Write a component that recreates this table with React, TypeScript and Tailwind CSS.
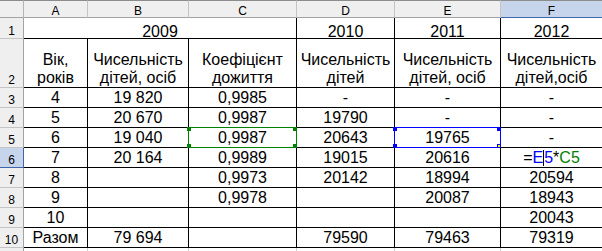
import React from 'react';

const FONT = "font-['Liberation_Sans',Arial,sans-serif]";

const COLS = ['A', 'B', 'C', 'D', 'E', 'F'];

const HEAD_LINES: string[][] = [
  ['Вік,', 'років'],
  ['Чисельність', 'дітей, осіб'],
  ['Коефіцієнт', 'дожиття'],
  ['Чисельність', 'дітей'],
  ['Чисельність', 'дітей, осіб'],
  ['Чисельність', 'дітей,осіб'],
];

const FORMULA = '__formula__';

const ROWS: string[][] = [
  ['4', '19 820', '0,9985', '-', '-', '-'],
  ['5', '20 670', '0,9987', '19790', '-', '-'],
  ['6', '19 040', '0,9987', '20643', '19765', '-'],
  ['7', '20 164', '0,9989', '19015', '20616', FORMULA],
  ['8', '', '0,9973', '20142', '18994', '20594'],
  ['9', '', '0,9978', '', '20087', '18943'],
  ['10', '', '', '', '', '20043'],
  ['Разом', '79 694', '', '79590', '79463', '79319'],
];

// edges of C5 (green) and E5 (blue) take the reference colours
const RIGHT_EDGE: Record<string, string> = {
  '5-1': 'border-r-[#008000]',
  '5-2': 'border-r-[#008000]',
  '5-3': 'border-r-[#0000ff]',
  '5-4': 'border-r-[#0000ff]',
};
const BOTTOM_EDGE: Record<string, string> = {
  '4-2': 'border-b-[#008000]',
  '5-2': 'border-b-[#008000]',
  '4-4': 'border-b-[#0000ff]',
  '5-4': 'border-b-[#0000ff]',
};

function RowHead({ n, active }: { n?: number; active?: boolean }) {
  return (
    <div
      className={`flex items-end justify-center border-r border-b text-[12px] leading-[14px] text-black overflow-hidden ${
        active
          ? 'bg-[#c6d5ec] border-r-[#3f66a8] border-b-[#3f66a8]'
          : 'bg-[#efefef] border-r-[#a3a3a3] border-b-[#c4c4c4]'
      }`}
    >
      {n}
    </div>
  );
}

function Formula() {
  return (
    <span className="whitespace-nowrap">
      =<span className="text-[#0000ff]">E</span>
      <span className="inline-block w-px h-[16px] bg-black align-[-3px]" />
      <span className="text-[#0000ff]">5</span>*<span className="text-[#008000]">C5</span>
    </span>
  );
}

// corner handles of a range-finder box
function Handles({ x, y, w, h, color, yellowCorner }: { x: number; y: number; w: number; h: number; color: string; yellowCorner?: boolean }) {
  return (
    <div className="absolute z-10" style={{ left: x, top: y, width: w, height: h }}>
      <div className={`absolute left-[-1px] top-0 w-[4px] h-[4px] ${color}`} />
      <div className={`absolute left-[-1px] bottom-0 w-[4px] h-[4px] ${color}`} />
      <div className={`absolute right-0 top-0 w-[4px] h-[4px] ${color}`} />
      {yellowCorner ? (
        <div className="absolute right-0 bottom-0 w-[4px] h-[4px] border border-[#0000ff] bg-[#ffff00]" />
      ) : (
        <div className={`absolute right-0 bottom-0 w-[4px] h-[4px] ${color}`} />
      )}
    </div>
  );
}

export default function App() {
  return (
    <div className={`relative w-[602px] h-[251px] overflow-hidden bg-white ${FONT}`}>
      <div className="grid grid-cols-[24px_64px_101px_108px_98px_106px_102px] grid-rows-[18px_21px_49px_repeat(8,20px)_4px] text-[16px] text-black">
        {/* column headers */}
        <div className="bg-[#efefef] border-t border-t-[#8c8c8c] border-r border-r-[#b5b5b5] border-b border-b-[#a3a3a3]" />
        {COLS.map((c) => (
          <div
            key={c}
            className={`flex items-end justify-center border-t border-t-[#8c8c8c] border-r border-b text-[12px] leading-[12px] ${
              c === 'F'
                ? 'bg-[#c6d5ec] border-r-[#b5b5b5] border-b-[#3f66a8]'
                : 'bg-[#efefef] border-r-[#c4c4c4] border-b-[#a3a3a3]'
            }`}
          >
            {c}
          </div>
        ))}

        {/* row 1 */}
        <RowHead n={1} />
        <div className="col-span-3 flex items-end justify-center border-r border-b border-black leading-[13px]">2009</div>
        <div className="flex items-end justify-center border-r border-b border-black leading-[13px]">2010</div>
        <div className="flex items-end justify-center border-r border-b border-black leading-[13px]">2011</div>
        <div className="flex items-end justify-center border-r border-b border-black leading-[13px]">2012</div>

        {/* row 2 */}
        <RowHead n={2} />
        {HEAD_LINES.map((lines, i) => (
          <div key={i} className="flex flex-col items-center justify-end border-r border-b border-black leading-[18px] whitespace-nowrap">
            {lines.map((l) => (
              <span key={l}>{l}</span>
            ))}
          </div>
        ))}

        {/* rows 3-10 */}
        {ROWS.map((row, r) => {
          const rowNum = r + 3;
          return (
            <React.Fragment key={r}>
              <RowHead n={rowNum} active={rowNum === 6} />
              {row.map((v, c) => {
                const k = `${rowNum}-${c}`;
                return (
                  <div
                    key={c}
                    className={`flex items-end justify-center border-r border-b leading-[18px] whitespace-nowrap ${RIGHT_EDGE[k] ?? 'border-r-black'} ${BOTTOM_EDGE[k] ?? 'border-b-black'}`}
                  >
                    {v === FORMULA ? <Formula /> : v}
                  </div>
                );
              })}
            </React.Fragment>
          );
        })}

        {/* row 11, cut off */}
        <RowHead />
        {COLS.map((c) => (
          <div key={c} className="border-r border-r-[#d0d0d0]" />
        ))}
      </div>

      <Handles x={188} y={127} w={109} h={21} color="bg-[#008000]" />
      <Handles x={394} y={127} w={107} h={21} color="bg-[#0000ff]" yellowCorner />
    </div>
  );
}
